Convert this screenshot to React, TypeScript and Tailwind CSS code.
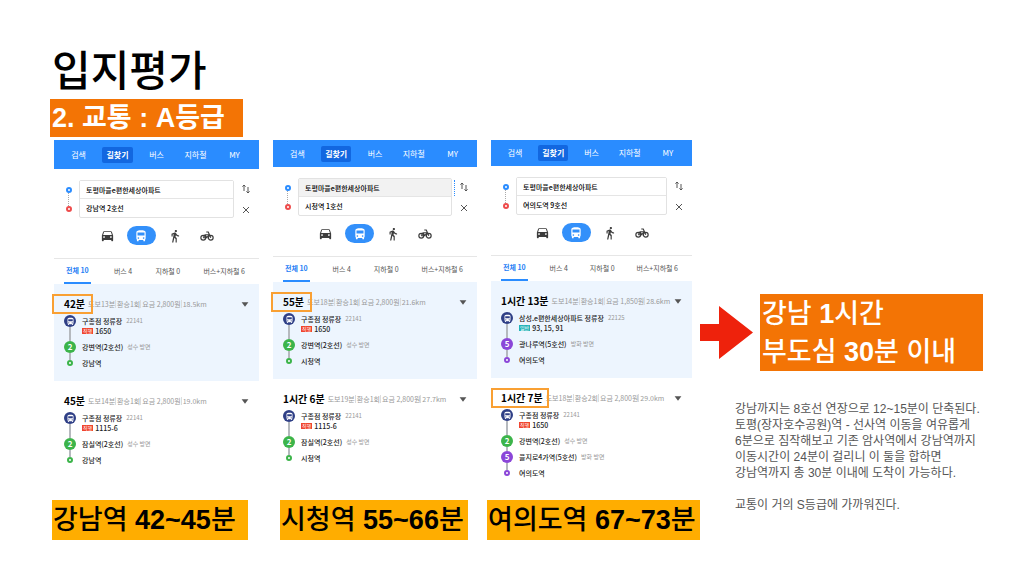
import React from "react";
import {
  MdDirectionsBus,
  MdDirectionsCar,
  MdDirectionsWalk,
} from "react-icons/md";

type Stop = {
  kind: "bus" | "line2" | "line5" | "end2" | "end5";
  name: string;
  note?: string;
  badge?: "직행" | "일반";
  routes?: string;
};

type Route = {
  time: string;
  facts: string[];
  stops: Stop[];
  mark?: string;
};

type Search = {
  id: string;
  to: string;
  header: string;
  focused?: boolean;
  routes: Route[];
};

const busStop = (routes: string): Stop => ({
  kind: "bus",
  name: "구종점 정류장",
  note: "22141",
  badge: "직행",
  routes,
});

const searches: Search[] = [
  {
    id: "gangnam",
    to: "강남역 2호선",
    header: "h-[29px]",
    routes: [
      {
        time: "42분",
        facts: ["도보13분", "환승1회", "요금 2,800원", "18.5km"],
        mark: "-left-0.5 w-[41px]",
        stops: [
          busStop("1650"),
          { kind: "line2", name: "강변역(2호선)", note: "성수 방면" },
          { kind: "end2", name: "강남역" },
        ],
      },
      {
        time: "45분",
        facts: ["도보14분", "환승1회", "요금 2,800원", "19.0km"],
        stops: [
          busStop("1115-6"),
          { kind: "line2", name: "잠실역(2호선)", note: "성수 방면" },
          { kind: "end2", name: "강남역" },
        ],
      },
    ],
  },
  {
    id: "cityhall",
    to: "시청역 1호선",
    header: "h-[27px]",
    focused: true,
    routes: [
      {
        time: "55분",
        facts: ["도보18분", "환승1회", "요금 2,800원", "21.6km"],
        mark: "-left-0.5 w-[41px]",
        stops: [
          busStop("1650"),
          { kind: "line2", name: "강변역(2호선)", note: "성수 방면" },
          { kind: "end2", name: "시청역" },
        ],
      },
      {
        time: "1시간 6분",
        facts: ["도보19분", "환승1회", "요금 2,800원", "27.7km"],
        stops: [
          busStop("1115-6"),
          { kind: "line2", name: "잠실역(2호선)", note: "성수 방면" },
          { kind: "end2", name: "시청역" },
        ],
      },
    ],
  },
  {
    id: "yeouido",
    to: "여의도역 9호선",
    header: "h-[26px]",
    routes: [
      {
        time: "1시간 13분",
        facts: ["도보14분", "환승1회", "요금 1,850원", "28.6km"],
        stops: [
          {
            kind: "bus",
            name: "삼성.e편한세상아파트 정류장",
            note: "22125",
            badge: "일반",
            routes: "93, 15, 91",
          },
          { kind: "line5", name: "광나루역(5호선)", note: "방화 방면" },
          { kind: "end5", name: "여의도역" },
        ],
      },
      {
        time: "1시간 7분",
        facts: ["도보18분", "환승2회", "요금 2,800원", "29.0km"],
        mark: "left-0 w-[58px]",
        stops: [
          busStop("1650"),
          { kind: "line2", name: "강변역(2호선)", note: "성수 방면" },
          { kind: "line5", name: "을지로4가역(5호선)", note: "방화 방면" },
          { kind: "end5", name: "여의도역" },
        ],
      },
    ],
  },
];

const circle =
  "flex size-3 shrink-0 items-center justify-center rounded-full text-[8px] leading-none font-bold text-white";

function StopIcon({ kind }: { kind: Stop["kind"] }) {
  if (kind === "bus")
    return (
      <span className={`${circle} bg-[#2f3f86]`}>
        <MdDirectionsBus size={9} />
      </span>
    );
  if (kind === "line2") return <span className={`${circle} bg-[#3cb44a]`}>2</span>;
  if (kind === "line5") return <span className={`${circle} bg-[#8b46d8]`}>5</span>;
  return (
    <>
      <span className="h-[3px] w-0.5 bg-[#b5b9be]" />
      <span
        className={
          kind === "end2"
            ? "size-1.5 rounded-full border-2 border-[#3cb44a] bg-white"
            : "size-1.5 rounded-full border-2 border-[#8b46d8] bg-white"
        }
      />
    </>
  );
}

function StopRow({ stop }: { stop: Stop }) {
  const isEnd = stop.kind === "end2" || stop.kind === "end5";
  const height = stop.kind === "bus" ? "h-[26px]" : isEnd ? "h-3" : "h-4";
  return (
    <li className={`flex gap-1.5 ${height}`}>
      <span className="flex w-3 flex-col items-center">
        <StopIcon kind={stop.kind} />
        {!isEnd && <span className="w-0.5 flex-1 bg-[#b5b9be]" />}
      </span>
      <div className="whitespace-nowrap text-[7px] leading-3 text-[#222]">
        <p className="flex items-center gap-1">
          <span className="font-medium">{stop.name}</span>
          {stop.note && <span className="text-[6px] text-[#999]">{stop.note}</span>}
        </p>
        {stop.routes && (
          <p className="flex items-center gap-0.5 leading-[8px]">
            <span
              className={
                stop.badge === "직행"
                  ? "bg-[#f0452e] px-px text-[5px] leading-[6px] text-white"
                  : "bg-[#22b3b8] px-px text-[5px] leading-[6px] text-white"
              }
            >
              {stop.badge}
            </span>
            <span className="font-medium">{stop.routes}</span>
          </p>
        )}
      </div>
    </li>
  );
}

function RouteCard({ route, active }: { route: Route; active: boolean }) {
  return (
    <article
      className={`relative pt-3 pr-2.5 pb-3 pl-2.5 ${active ? "bg-[#edf5fe]" : "bg-white"}`}
    >
      <div className="flex h-4 items-center gap-0.5 whitespace-nowrap">
        <h3 className="text-[10px] leading-4 font-bold text-black">{route.time}</h3>
        <ul className="flex divide-x divide-[#ddd] text-[7px] leading-2 text-[#999]">
          {route.facts.map((fact) => (
            <li key={fact} className="pl-px">
              {fact}
            </li>
          ))}
        </ul>
        <button type="button" aria-label={`${route.time} 상세`} className="ml-auto">
          <svg viewBox="0 0 8 5" className="h-[5px] w-2 fill-[#555]">
            <path d="M.6.3h6.8L4 4.7z" />
          </svg>
        </button>
      </div>
      <ul className="mt-[3px]">
        {route.stops.map((stop) => (
          <StopRow key={stop.name} stop={stop} />
        ))}
      </ul>
      {route.mark && (
        <span
          className={`absolute top-[10px] h-5 border-2 border-[#f9a033] ${route.mark}`}
        />
      )}
    </article>
  );
}

function Marker({ className }: { className: string }) {
  return <span className={`size-1.5 rounded-full border-2 bg-white ${className}`} />;
}

function Phone({ search }: { search: Search }) {
  const field = "h-[18px] w-full min-w-0 px-1.5 text-[7px] font-medium text-black outline-none";
  return (
    <section className="min-w-0 bg-white">
      <nav
        className={`grid grid-cols-5 items-center justify-items-center bg-[#2a8cff] px-[5px] text-[8px] text-white ${search.header}`}
      >
        <a href="#search">검색</a>
        <a href="#route" className="rounded-xs bg-[#1267e0] px-1 leading-4 font-bold">
          길찾기
        </a>
        <a href="#bus">버스</a>
        <a href="#subway">지하철</a>
        <a href="#my">MY</a>
      </nav>
      <form className="flex pt-[11px] pr-2">
        <div className="flex w-[25px] flex-col items-center pt-[7px] pl-1">
          <Marker className="border-[#2a8cff]" />
          <span className="h-[13px] border-l border-dotted border-[#aaa]" />
          <Marker className="border-[#ee4b4b]" />
        </div>
        <div className="min-w-0 flex-1 divide-y divide-[#e5e5e5] rounded-xs border border-[#e2e2e2]">
          <input
            aria-label="출발지"
            defaultValue="토평마을e편한세상아파트"
            className={`${field} block ${search.focused ? "bg-[#f2f2f2]" : "bg-white"}`}
          />
          <input aria-label="도착지" defaultValue={search.to} className={`${field} block`} />
        </div>
        <div
          className={`my-0.5 h-4 w-[3px] border-r border-dotted ${search.focused ? "border-[#2a8cff]" : "border-transparent"}`}
        />
        <div className="flex w-[14px] flex-col items-end justify-between py-1 pr-px">
          <button type="button" aria-label="출발지와 도착지 바꾸기">
            <svg viewBox="0 0 8 10" className="h-2.5 w-2 fill-none stroke-[#555]">
              <path d="M2 7V1M.4 2.6L2 1l1.6 1.6M6 3v6M4.4 7.4L6 9l1.6-1.6" />
            </svg>
          </button>
          <button type="button" aria-label="지우기">
            <svg viewBox="0 0 8 8" className="size-2 fill-none stroke-[#555]">
              <path d="M1 1l6 6M7 1L1 7" />
            </svg>
          </button>
        </div>
      </form>
      <div className="mt-2 mb-[13px] flex h-[19px] items-center justify-center gap-3 text-[#3c3c3c]">
        <button type="button" aria-label="자동차">
          <MdDirectionsCar size={15} />
        </button>
        <button
          type="button"
          aria-label="대중교통"
          className="flex h-[19px] w-[29px] items-center justify-center rounded-full bg-[#3390fa] text-white"
        >
          <MdDirectionsBus size={14} />
        </button>
        <button type="button" aria-label="도보" className="mr-1.5">
          <MdDirectionsWalk size={14} />
        </button>
        <button type="button" aria-label="자전거">
          <svg viewBox="0 0 28 20" className="h-2.5 w-3.5 fill-none stroke-current stroke-[2.4]">
            <circle cx="6.500" cy="13.500" r="4.800" />
            <circle cx="21.500" cy="13.500" r="4.800" />
            <path d="M6.500 13.500L10 7.500h8M13.500 13.500L18 7.500M6.500 13.500h7L10 7.500M21.500 13.500L16.500 2H12.500" />
          </svg>
        </button>
      </div>
      <div className="flex h-[26px] items-stretch justify-between border-t border-[#e6e6e6] pr-3.5 pl-2.5 text-[7px] whitespace-nowrap text-[#555]">
        <button
          type="button"
          className="border-b-2 border-[#2a8cff] px-0.5 font-bold text-[#1f80f5]"
        >
          전체 10
        </button>
        <button type="button">버스 4</button>
        <button type="button">지하철 0</button>
        <button type="button">버스+지하철 6</button>
      </div>
      {search.routes.map((route, i) => (
        <RouteCard key={route.time} route={route} active={i === 0} />
      ))}
    </section>
  );
}

function Caption({ station, minutes, className }: { station: string; minutes: string; className: string }) {
  return (
    <p className={`bg-[#ffad00] pl-px text-[27px] leading-10 font-medium whitespace-nowrap text-black ${className}`}>
      {station} <b>{minutes}</b>분
    </p>
  );
}

export default function App() {
  return (
    <main className="flex min-h-screen bg-white pr-[31px] pl-[50px] font-['Liberation_Sans','Noto_Sans_CJK_KR',sans-serif]">
      <div className="min-w-0 flex-[650] pt-12">
        <h1 className="pl-0.5 text-[42px] leading-12 font-medium text-black">입지평가</h1>
        <h2 className="mt-[3px] w-[193px] bg-[#f37405] pl-0.5 text-[27px] leading-[38px] font-bold whitespace-nowrap text-white">
          2. 교통 : A등급
        </h2>
        <div className="mt-[3px] grid grid-cols-[205fr_204fr_201fr] items-start gap-3.5 pr-2 pl-1 font-['Noto_Sans_CJK_KR',sans-serif]">
          {searches.map((search) => (
            <Phone key={search.id} search={search} />
          ))}
        </div>
        <div className="mt-[9px] flex pl-0.5">
          <Caption station="강남역" minutes="42~45" className="mr-8 flex-[196]" />
          <Caption station="시청역" minutes="55~66" className="mr-[19px] flex-[188]" />
          <Caption station="여의도역" minutes="67~73" className="flex-[213]" />
        </div>
      </div>
      <aside className="min-w-0 flex-[283] pt-[294px]">
        <div className="flex items-center gap-[7px]">
          <svg viewBox="0 0 53 53" className="size-[53px] shrink-0 fill-[#ee220c]">
            <path d="M0 18h19V0l34 26.500L19 53V35H0z" />
          </svg>
          <p className="flex-1 bg-[#f37405] pt-px pl-0.5 text-[27px] leading-[38px] font-medium whitespace-nowrap text-white">
            강남 <b>1</b>시간
            <br />
            부도심 <b>30</b>분 이내
          </p>
        </div>
        <div className="mt-[30px] space-y-4 pl-[35px] text-[12px] leading-4 whitespace-nowrap text-[#555]">
          <p>
            강남까지는 8호선 연장으로 12~15분이 단축된다.
            <br />
            토평(장자호수공원)역 - 선사역 이동을 여유롭게
            <br />
            6분으로 짐작해보고 기존 암사역에서 강남역까지
            <br />
            이동시간이 24분이 걸리니 이 둘을 합하면
            <br />
            강남역까지 총 30분 이내에 도착이 가능하다.
          </p>
          <p>교통이 거의 S등급에 가까워진다.</p>
        </div>
      </aside>
    </main>
  );
}
